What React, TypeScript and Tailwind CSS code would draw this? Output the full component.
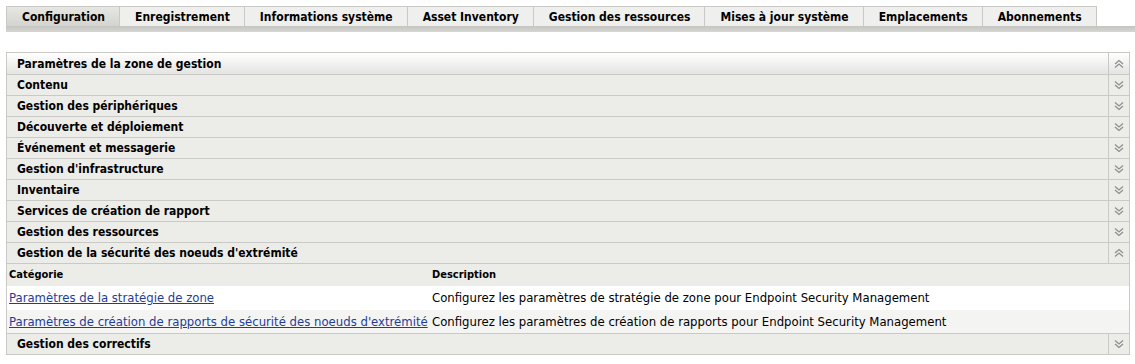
import React from 'react';

const tabs = [
  'Configuration',
  'Enregistrement',
  'Informations système',
  'Asset Inventory',
  'Gestion des ressources',
  'Mises à jour système',
  'Emplacements',
  'Abonnements',
];

const sections = [
  'Contenu',
  'Gestion des périphériques',
  'Découverte et déploiement',
  'Événement et messagerie',
  "Gestion d'infrastructure",
  'Inventaire',
  'Services de création de rapport',
  'Gestion des ressources',
];

const Chevron: React.FC<{ up?: boolean }> = ({ up }) => (
  <svg width="10" height="10" viewBox="0 0 10 10" className={up ? 'rotate-180' : ''}>
    <path d="M1 1.5 L5 5 L9 1.5" stroke="#8f8f8f" strokeWidth="1.3" fill="none" />
    <path d="M1 5 L5 8.5 L9 5" stroke="#8f8f8f" strokeWidth="1.3" fill="none" />
  </svg>
);

const SectionRow: React.FC<{ label: string; up?: boolean; header?: boolean }> = ({ label, up, header }) => (
  <div
    className={`flex ${header ? 'h-[22px] bg-gradient-to-b from-[#ffffff] to-[#e4e4e2]' : 'h-[21px] bg-[#ecece9]'} border-b border-[#c9c9c6]`}
  >
    <div className="flex-1 flex items-center pl-[10px] font-bold text-[12px] text-black">{label}</div>
    <div className="w-[21px] border-l border-[#c9c9c6] flex items-center justify-center">
      <Chevron up={up} />
    </div>
  </div>
);

const App: React.FC = () => {
  return (
    <div className="w-[1135px] h-[364px] bg-white font-['DejaVu_Sans_Condensed','DejaVu_Sans',sans-serif] text-black overflow-hidden">
      {/* Tabs */}
      <div className="pt-[6px] pl-[6px]">
        <div className="flex h-[20px]">
          {tabs.map((t, i) => (
            <div
              key={t}
              className={`pl-[15px] pr-[14px] flex items-center font-bold text-[12px] border-t border-r border-[#c9c9c6] ${i === 0 ? 'border-l bg-gradient-to-b from-[#e6e6e3] to-[#d3d3cf]' : 'bg-[#efefed]'}`}
            >
              {t}
            </div>
          ))}
        </div>
        <div className="h-[6px] bg-gradient-to-b from-[#c4c4c0] to-[#d6d6d3]" />
      </div>

      {/* Panel */}
      <div className="mt-[20px] ml-[6px] mr-[5px] border-l border-r border-t border-[#c9c9c6]">
        <SectionRow label="Paramètres de la zone de gestion" up header />
        {sections.map(s => (
          <SectionRow key={s} label={s} />
        ))}
        <SectionRow label="Gestion de la sécurité des noeuds d'extrémité" up />
        <div className="text-[13px]">
          <div className="flex h-[22px] items-center bg-[#ecece9] font-bold text-[11px]">
            <div className="w-[425px] pl-[2px]">Catégorie</div>
            <div>Description</div>
          </div>
          <div className="flex h-[24px] items-center bg-white">
            <div className="w-[425px] pl-[2px]">
              <a href="#" className="text-[#1f3d99] underline">Paramètres de la stratégie de zone</a>
            </div>
            <div>Configurez les paramètres de stratégie de zone pour Endpoint Security Management</div>
          </div>
          <div className="flex h-[24px] items-center bg-[#f4f4f3] border-b border-[#c9c9c6]">
            <div className="w-[425px] pl-[2px] whitespace-nowrap">
              <a href="#" className="text-[#1f3d99] underline">Paramètres de création de rapports de sécurité des noeuds d'extrémité</a>
            </div>
            <div>Configurez les paramètres de création de rapports pour Endpoint Security Management</div>
          </div>
        </div>
        <SectionRow label="Gestion des correctifs" />
      </div>
    </div>
  );
};

export default App;
